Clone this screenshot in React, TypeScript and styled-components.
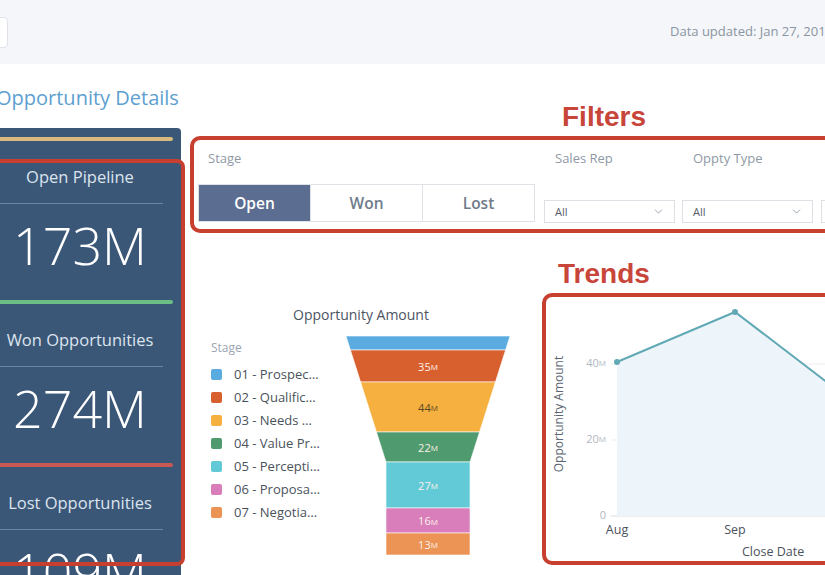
import React from "react";
import styled, { createGlobalStyle } from "styled-components";
import { ChevronDown } from "lucide-react";

const GlobalStyle = createGlobalStyle`
  * { box-sizing: border-box; }
  html, body { margin: 0; padding: 0; background: #ffffff; }
  body {
    width: 825px;
    height: 575px;
    overflow: hidden;
    font-family: "Open Sans", "Noto Sans", sans-serif;
  }
`;

const metrics = [
  { label: "Open Pipeline", value: "173M", color: "#d8b97e" },
  { label: "Won Opportunities", value: "274M", color: "#6cbf84" },
  { label: "Lost Opportunities", value: "109M", color: "#c65a52" },
];

const stages = [
  { name: "01 - Prospec…", color: "#5aace0" },
  { name: "02 - Qualific…", color: "#d8602e" },
  { name: "03 - Needs …", color: "#f5b03f" },
  { name: "04 - Value Pr…", color: "#4f9a6f" },
  { name: "05 - Percepti…", color: "#62cad6" },
  { name: "06 - Proposa…", color: "#d97dbb" },
  { name: "07 - Negotia…", color: "#eb9455" },
];

// funnel bands in page coordinates (the svg viewBox matches the page)
const bands = [
  { top: 336, bottom: 350, color: "#5aace0", label: "", dark: false },
  { top: 350, bottom: 382, color: "#d8602e", label: "35", dark: false },
  { top: 382, bottom: 432, color: "#f5b03f", label: "44", dark: true },
  { top: 432, bottom: 462, color: "#4f9a6f", label: "22", dark: false },
  { top: 462, bottom: 508, color: "#62cad6", label: "27", dark: false },
  { top: 508, bottom: 533, color: "#d97dbb", label: "16", dark: false },
  { top: 533, bottom: 555, color: "#eb9455", label: "13", dark: false },
];

const FUNNEL_CX = 428;
const halfWidth = (y: number) => (y >= 462 ? 42 : 82 - (40 * (y - 336)) / 126);

const trendPoints = [
  [617, 359],
  [735, 309],
  [853, 399],
  [971, 420],
];

const Metric: React.FC<{ label: string; value: string; color: string }> = ({ label, value, color }) => (
  <>
    <ColorLine $color={color} />
    <MetricLabel>{label}</MetricLabel>
    <Separator />
    <MetricValue>{value}</MetricValue>
  </>
);

const Funnel: React.FC = () => (
  <FunnelSvg width={166} height={222} viewBox="346 336 166 222">
    {bands.map((b) => {
      const t = halfWidth(b.top);
      const btm = halfWidth(b.bottom);
      const pts = [
        [FUNNEL_CX - t, b.top],
        [FUNNEL_CX + t, b.top],
        [FUNNEL_CX + btm, b.bottom],
        [FUNNEL_CX - btm, b.bottom],
      ]
        .map((p) => p.join(","))
        .join(" ");
      return (
        <g key={b.top}>
          <polygon points={pts} fill={b.color} stroke="#ffffff" strokeWidth={0.6} />
          {b.label && (
            <text
              x={FUNNEL_CX}
              y={(b.top + b.bottom) / 2}
              textAnchor="middle"
              dominantBaseline="central"
              fontSize={11}
              fill={b.dark ? "#5b4a26" : "#fdf1ea"}
            >
              {b.label}
              <tspan fontSize={8}>M</tspan>
            </text>
          )}
        </g>
      );
    })}
  </FunnelSvg>
);

const TrendChart: React.FC = () => {
  const line = trendPoints.map((p) => p.join(",")).join(" ");
  const area = `${line} 971,513 617,513`;
  return (
    <svg width={300} height={264} viewBox="546 294 300 264" style={{ display: "block" }}>
      <text
        x={558}
        y={411}
        transform="rotate(-90 558 411)"
        textAnchor="middle"
        dominantBaseline="central"
        fontSize={12}
        fill="#5b6572"
      >
        Opportunity Amount
      </text>
      {[
        { y: 361, label: "40", unit: "M" },
        { y: 437, label: "20", unit: "M" },
        { y: 513, label: "0", unit: "" },
      ].map((t) => (
        <g key={t.y}>
          <line x1={611} x2={846} y1={t.y} y2={t.y} stroke={t.y === 513 ? "#d9dee4" : "#e8ecf0"} strokeWidth={1} />
          <text x={606} y={t.y - 2} textAnchor="end" dominantBaseline="central" fontSize={11} fill="#b0b8c1">
            {t.label}
            {t.unit && <tspan fontSize={8}>{t.unit}</tspan>}
          </text>
        </g>
      ))}
      <polygon points={area} fill="#eef5fa" />
      <polyline points={line} fill="none" stroke="#62a9b6" strokeWidth={2} />
      {trendPoints.map(([x, y]) => (
        <circle key={x} cx={x} cy={y} r={3} fill="#62a9b6" />
      ))}
      <text x={617} y={526} textAnchor="middle" dominantBaseline="central" fontSize={12.5} fill="#4a525c">
        Aug
      </text>
      <text x={735} y={526} textAnchor="middle" dominantBaseline="central" fontSize={12.5} fill="#4a525c">
        Sep
      </text>
      <text x={742} y={548} dominantBaseline="central" fontSize={12.5} fill="#4a525c">
        Close Date
      </text>
    </svg>
  );
};

const App: React.FC = () => {
  return (
    <>
      <GlobalStyle />
      <Header>
        <MenuButton />
        <Updated>Data updated: Jan 27, 2018</Updated>
      </Header>
      <Main>
        <LeftCol>
          <PageTitle>Opportunity Details</PageTitle>
          <Panel>
            {metrics.map((m) => (
              <Metric key={m.label} {...m} />
            ))}
            <MetricsCallout />
          </Panel>
        </LeftCol>

        <RightCol>
          <CalloutHeading $indent={372}>Filters</CalloutHeading>
          <FilterBox>
            <StageGroup>
              <FilterLabel $indent={10}>Stage</FilterLabel>
              <Segmented>
                <Segment $active>Open</Segment>
                <Segment>Won</Segment>
                <Segment>Lost</Segment>
              </Segmented>
            </StageGroup>
            <SelectGroup $gap={9}>
              <FilterLabel $indent={11}>Sales Rep</FilterLabel>
              <Select>
                All
                <ChevronDown size={13} color="#8e98a4" strokeWidth={1.6} />
              </Select>
            </SelectGroup>
            <SelectGroup $gap={7}>
              <FilterLabel $indent={11}>Oppty Type</FilterLabel>
              <Select>
                All
                <ChevronDown size={13} color="#8e98a4" strokeWidth={1.6} />
              </Select>
            </SelectGroup>
            <SelectGroup $gap={8}>
              <FilterLabel $indent={11}>Region</FilterLabel>
              <Select>
                All
                <ChevronDown size={13} color="#8e98a4" strokeWidth={1.6} />
              </Select>
            </SelectGroup>
          </FilterBox>

          <LowerRow>
            <FunnelArea>
              <ChartTitle>Opportunity Amount</ChartTitle>
              <FunnelBody>
                <Legend>
                  <LegendTitle>Stage</LegendTitle>
                  {stages.map((s) => (
                    <LegendItem key={s.name}>
                      <Swatch $color={s.color} />
                      {s.name}
                    </LegendItem>
                  ))}
                </Legend>
                <Funnel />
              </FunnelBody>
            </FunnelArea>

            <TrendsCol>
              <CalloutHeading $indent={16}>Trends</CalloutHeading>
              <TrendsBox>
                <TrendChart />
              </TrendsBox>
            </TrendsCol>
          </LowerRow>
        </RightCol>
      </Main>
    </>
  );
};

// Styled-components
const Header = styled.header`
  height: 64px;
  background: #f4f6fa;
  display: flex;
  align-items: flex-start;
`;

const MenuButton = styled.div`
  margin-left: -22px;
  margin-top: 17px;
  width: 30px;
  height: 31px;
  background: #ffffff;
  border: 1px solid #dfe3e9;
  border-radius: 4px;
`;

const Updated = styled.div`
  margin-left: auto;
  margin-top: 23px;
  width: 155px;
  white-space: nowrap;
  overflow: hidden;
  font-size: 13px;
  line-height: 16px;
  color: #8b95a1;
`;

const Main = styled.main`
  display: flex;
  gap: 9px;
`;

const LeftCol = styled.div`
  flex: 0 0 202px;
  margin-left: -21px;
`;

const PageTitle = styled.h1`
  margin: 22px 0 18px 17px;
  font-size: 20px;
  line-height: 24px;
  font-weight: 400;
  color: #5d9fd0;
  white-space: nowrap;
`;

const Panel = styled.div`
  position: relative;
  height: 460px;
  padding: 9px 8px 0;
  background: #3b5778;
  border-radius: 0 4px 0 0;
`;

const ColorLine = styled.div<{ $color: string }>`
  height: 4px;
  border-radius: 2px;
  background: ${(p) => p.$color};
`;

const MetricLabel = styled.div`
  margin-top: 26px;
  text-align: center;
  font-size: 16.5px;
  line-height: 20px;
  color: #dce4ee;
  white-space: nowrap;
`;

const Separator = styled.div`
  height: 1px;
  margin: 16px 10px 0;
  background: #6b83a4;
`;

const MetricValue = styled.div`
  margin: 11px 0 25px;
  text-align: center;
  font-size: 52px;
  font-weight: 300;
  line-height: 60px;
  color: #ffffff;
`;

const MetricsCallout = styled.div`
  position: absolute;
  top: 31px;
  left: -12px;
  right: -4px;
  height: 407px;
  border: 4px solid #c7402f;
  border-radius: 8px;
  pointer-events: none;
`;

const RightCol = styled.div`
  flex: 0 0 660px;
  padding-top: 37px;
`;

const CalloutHeading = styled.div<{ $indent: number }>`
  padding-left: ${(p) => p.$indent}px;
  margin-bottom: 3px;
  font-family: "Liberation Sans", Arial, sans-serif;
  font-weight: 700;
  font-size: 28px;
  line-height: 32px;
  color: #c8453a;
`;

const FilterBox = styled.div`
  height: 97px;
  display: flex;
  padding: 9px 0 6px 4px;
  border: 4px solid #c7402f;
  border-radius: 10px;
`;

const StageGroup = styled.div`
  flex: 0 0 337px;
  display: flex;
  flex-direction: column;
`;

const FilterLabel = styled.div<{ $indent: number }>`
  padding-left: ${(p) => p.$indent}px;
  font-size: 13px;
  line-height: 18px;
  color: #8f99a6;
  white-space: nowrap;
`;

const Segmented = styled.div`
  margin-top: auto;
  margin-bottom: 1px;
  height: 38px;
  display: flex;
  border: 1px solid #dfe3e8;
`;

const Segment = styled.div<{ $active?: boolean }>`
  flex: 1;
  display: flex;
  align-items: center;
  justify-content: center;
  font-size: 15.5px;
  font-weight: 600;
  color: ${(p) => (p.$active ? "#ffffff" : "#707c8a")};
  background: ${(p) => (p.$active ? "#5b6d90" : "#ffffff")};

  & + & {
    border-left: 1px solid #dfe3e8;
  }
`;

const SelectGroup = styled.div<{ $gap: number }>`
  flex: 0 0 131px;
  margin-left: ${(p) => p.$gap}px;
  display: flex;
  flex-direction: column;
`;

const Select = styled.div`
  margin-top: auto;
  height: 23px;
  display: flex;
  align-items: center;
  justify-content: space-between;
  padding: 0 9px 0 10px;
  border: 1px solid #dcdfe4;
  font-size: 11px;
  color: #555e68;
`;

const LowerRow = styled.div`
  display: flex;
  margin-top: 25px;
`;

const FunnelArea = styled.div`
  flex: 0 0 352px;
  padding-top: 48px;
`;

const ChartTitle = styled.div`
  width: 342px;
  text-align: center;
  font-size: 14px;
  line-height: 18px;
  color: #4b5563;
`;

const FunnelBody = styled.div`
  display: flex;
  align-items: flex-start;
`;

const Legend = styled.div`
  flex: 0 0 156px;
  padding: 16px 0 0 21px;
`;

const LegendTitle = styled.div`
  margin-bottom: 6.5px;
  font-size: 12px;
  line-height: 16px;
  color: #9ba6b2;
`;

const LegendItem = styled.div`
  height: 23px;
  display: flex;
  align-items: center;
  gap: 12px;
  font-size: 13px;
  color: #4a525c;
  white-space: nowrap;
`;

const Swatch = styled.span<{ $color: string }>`
  width: 11px;
  height: 11px;
  border-radius: 2px;
  background: ${(p) => p.$color};
`;

const FunnelSvg = styled.svg`
  display: block;
  margin-top: 12px;
`;

const TrendsCol = styled.div`
  flex: 1;
`;

const TrendsBox = styled.div`
  height: 272px;
  border: 4px solid #c7402f;
  border-radius: 10px;
  overflow: hidden;
`;

export default App;
